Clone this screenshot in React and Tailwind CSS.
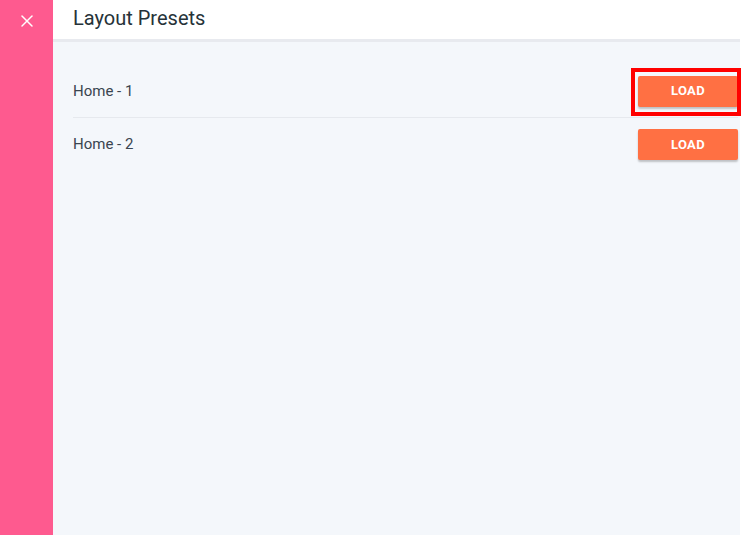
import React from 'react'
import { X } from 'lucide-react'

const presets = ['Home - 1', 'Home - 2']

// --- Preset row -------------------------------------------------------------
function PresetRow({ name, highlighted, last }) {
  return (
    <div className={`flex h-[53px] items-center justify-between ${last ? '' : 'border-b border-[#e6e9ee]'}`}>
      <span className="text-[15px] text-[#3a4550]">{name}</span>
      <div className="relative">
        {highlighted && (
          <div className="pointer-events-none absolute -left-[7px] -right-[3px] -top-[8px] -bottom-[9px] border-4 border-[#ff0000]" />
        )}
        <button className="h-[31px] w-[100px] rounded-[2px] bg-[#ff7043] text-[13px] font-bold tracking-wide text-white shadow-[0_2px_2px_rgba(0,0,0,0.22)]">
          LOAD
        </button>
      </div>
    </div>
  )
}

export default function App() {
  return (
    <div className="flex h-[535px] w-[746px] bg-white font-['Roboto',sans-serif]">
      {/* Sidebar */}
      <div className="flex w-[53px] shrink-0 justify-center bg-[#fe5a8f] pt-[11px]">
        <X className="h-[20px] w-[20px] text-white" strokeWidth={1.8} />
      </div>

      {/* Main */}
      <div className="flex w-[687px] flex-col">
        <header className="flex h-[42px] items-center border-b-[3px] border-[#e8eaef] bg-white pl-[20px] pb-[4px]">
          <h1 className="text-[20px] text-[#263238]">Layout Presets</h1>
        </header>
        <div className="flex-1 bg-[#f4f7fb] pl-[20px] pr-[2px] pt-[23px]">
          {presets.map((p, i) => (
            <PresetRow key={p} name={p} highlighted={i === 0} last={i === presets.length - 1} />
          ))}
        </div>
      </div>
    </div>
  )
}
